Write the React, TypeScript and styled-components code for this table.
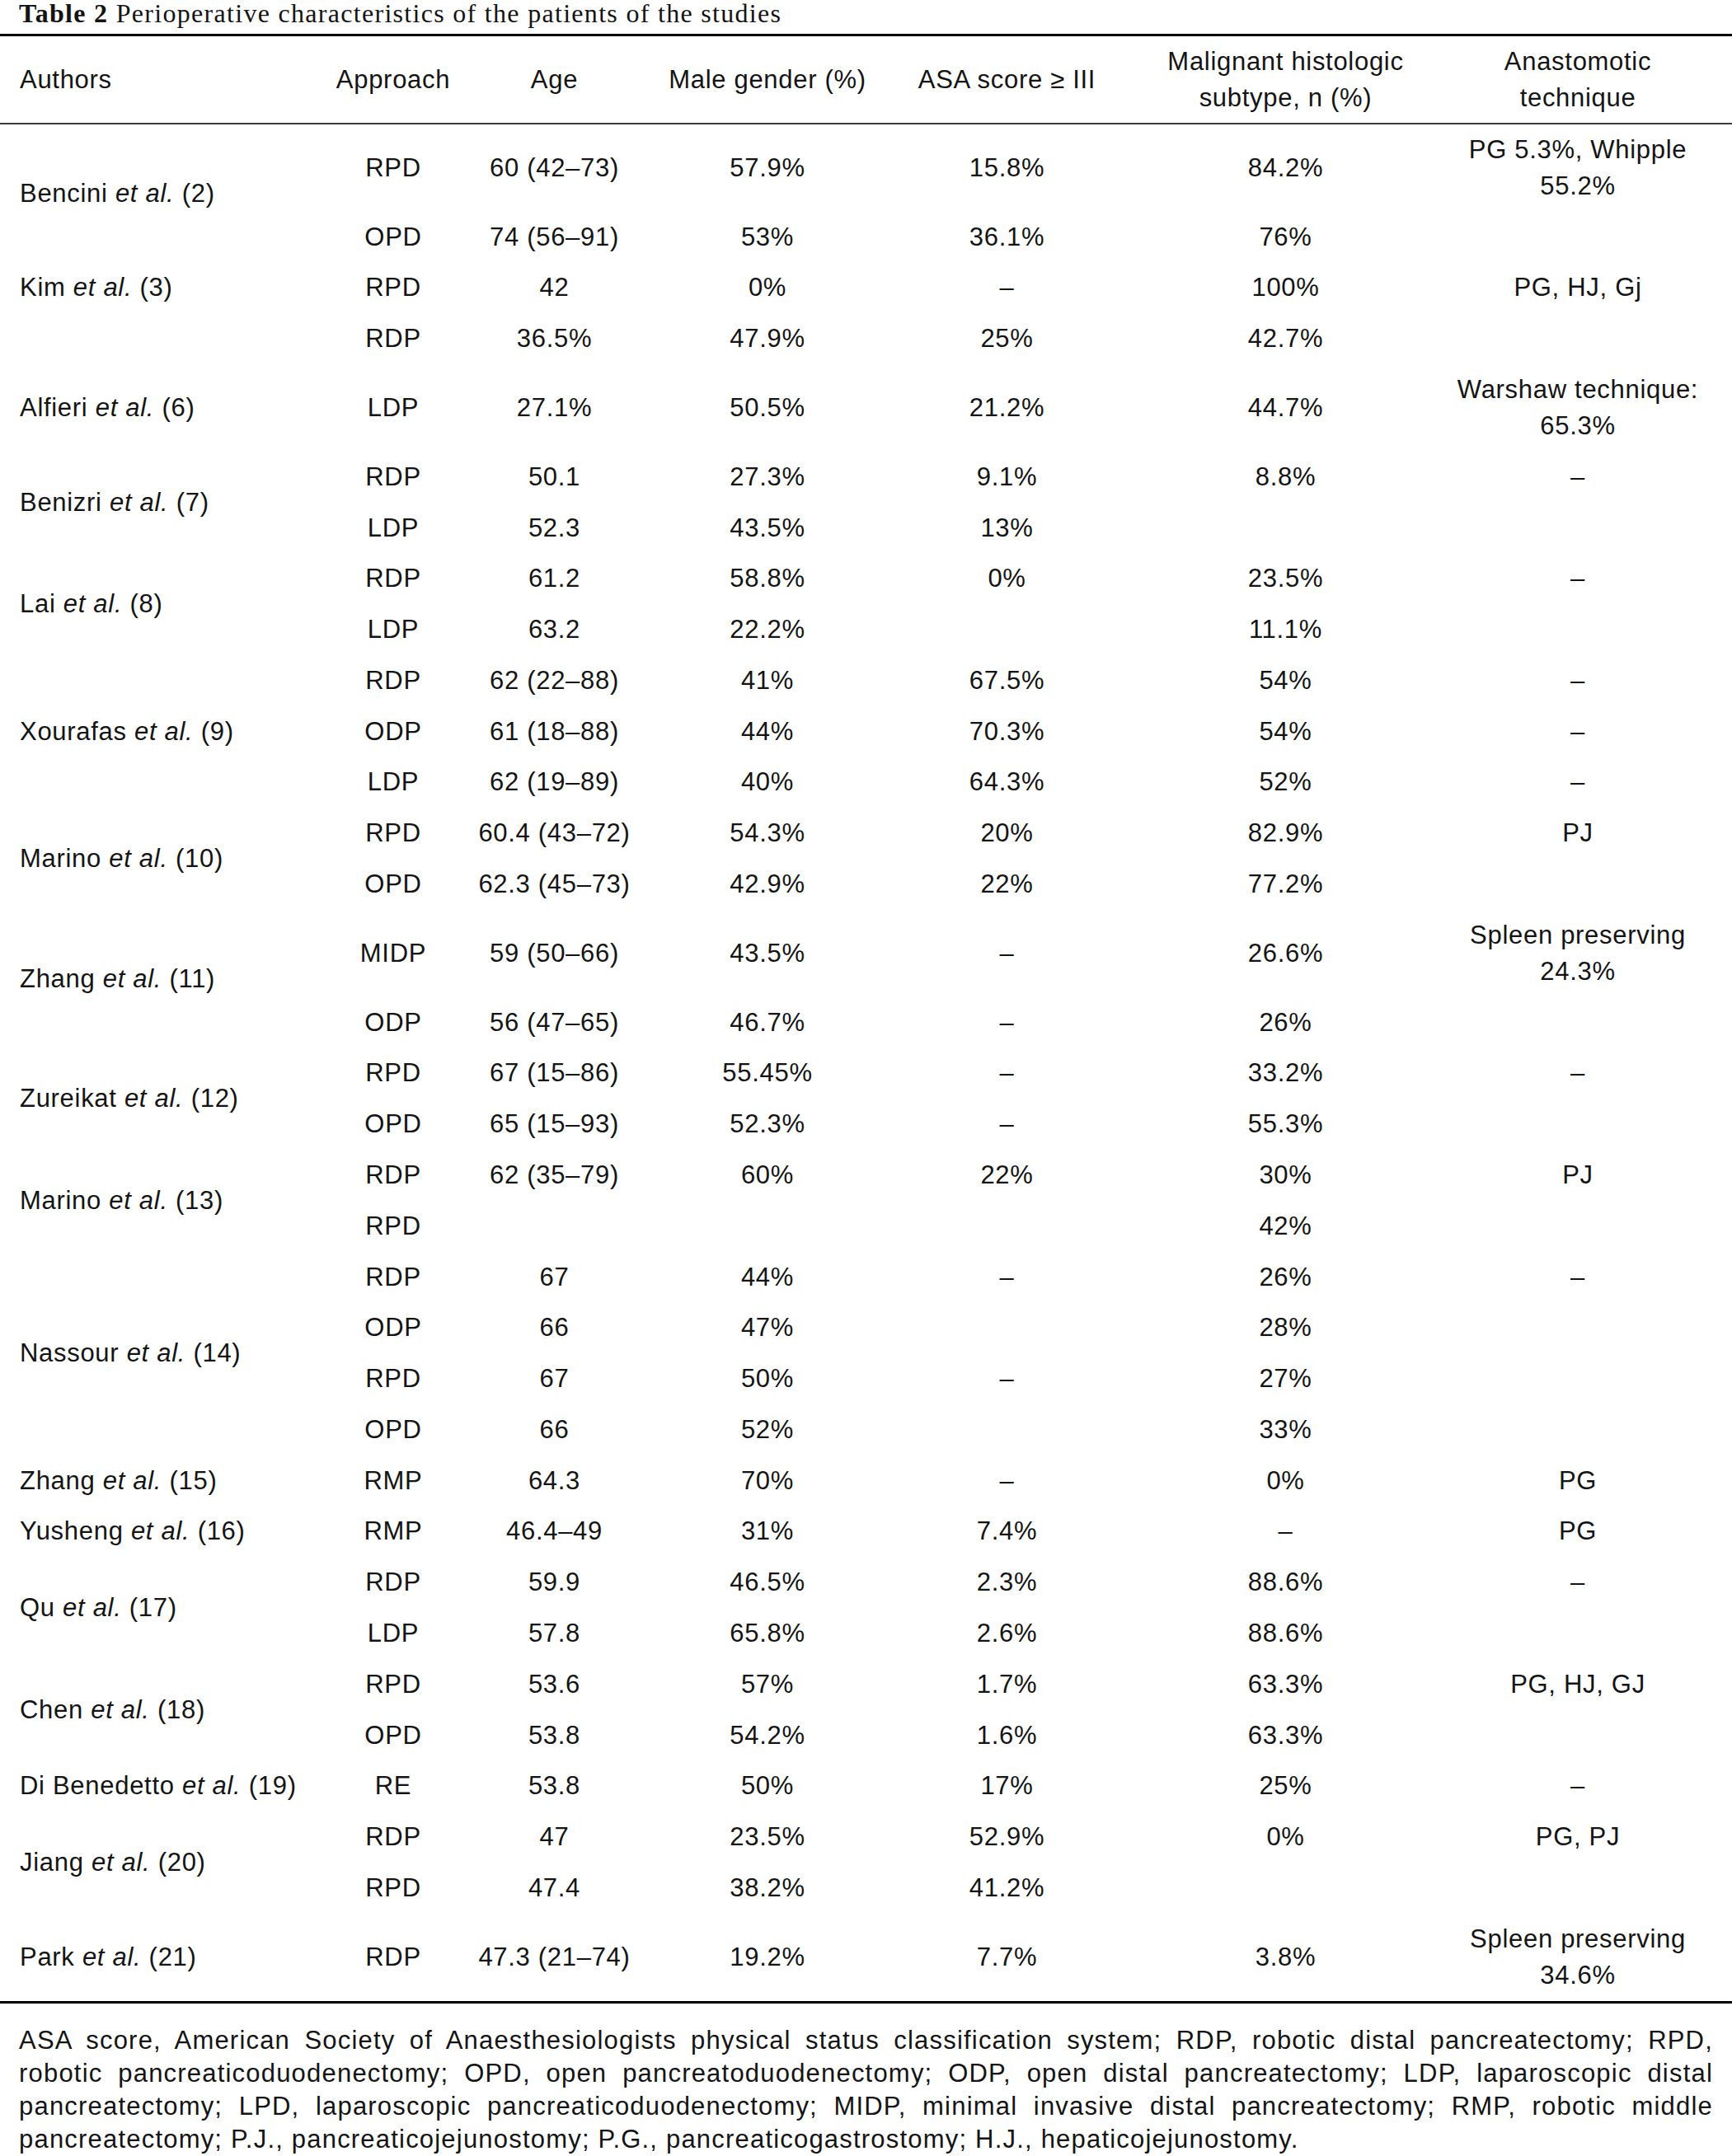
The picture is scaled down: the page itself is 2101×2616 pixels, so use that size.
import React from "react";
import styled, { createGlobalStyle } from "styled-components";

const GlobalStyle = createGlobalStyle`
  html, body { margin: 0; padding: 0; background: #ffffff; }
  body { font-family: "Liberation Sans", Arial, sans-serif; color: #141414; }
`;

const Page = styled.div`
  width: 2101px;
  background: #ffffff;
`;

const Caption = styled.div`
  height: 41px;
  padding-left: 23px;
  box-sizing: border-box;
  font-family: "Liberation Serif", "Times New Roman", serif;
  font-size: 32px;
  letter-spacing: 1.3px;
  line-height: 33px;
  color: #141414;
  white-space: nowrap;
`;

const CaptionLabel = styled.span`
  font-weight: 700;
`;

const Table = styled.table`
  width: 2101px;
  border-collapse: separate;
  border-spacing: 0;
  table-layout: fixed;
  font-family: "Liberation Sans", Arial, sans-serif;
  font-size: 31px;
  letter-spacing: 0.7px;
  color: #141414;
`;

const Col = styled.col<{ $w: number }>`
  width: ${(p) => p.$w}px;
`;

const Th = styled.th<{ $left?: boolean; $last?: boolean }>`
  font-weight: 400;
  line-height: 44px;
  padding: 8.5px 0;
  text-align: ${(p) => (p.$left ? "left" : "center")};
  padding-left: ${(p) => (p.$left ? "24px" : "0")};
  padding-right: ${(p) => (p.$last ? "25px" : "0")};
  vertical-align: middle;
  border-top: 3px solid #000;
  border-bottom: 2px solid #3c3c3c;
`;

const Td = styled.td<{ $left?: boolean; $last?: boolean }>`
  line-height: 44px;
  padding: 8.9px 0;
  text-align: ${(p) => (p.$left ? "left" : "center")};
  padding-left: ${(p) => (p.$left ? "24px" : "0")};
  padding-right: ${(p) => (p.$last ? "25px" : "0")};
  vertical-align: middle;
  white-space: nowrap;
`;

const BodyRow = styled.tr`
  &:last-child > td {
    border-bottom: 3px solid #000;
  }
`;

const Notes = styled.div`
  padding: 25px 23px 0 23px;
  font-size: 31px;
  line-height: 40px;
  letter-spacing: 1.2px;
  color: #141414;
`;

const NoteLine = styled.div<{ $last?: boolean }>`
  text-align: ${(p) => (p.$last ? "left" : "justify")};
  text-align-last: ${(p) => (p.$last ? "left" : "justify")};
`;

type Author = [string, string, number] | "blank" | undefined;

interface Row {
  a?: Author;
  ap: string;
  age: string;
  male: string;
  asa: string;
  mal: string;
  tech?: string[];
}

const rows: Row[] = [
  { a: ["Bencini", "2", 2], ap: "RPD", age: "60 (42–73)", male: "57.9%", asa: "15.8%", mal: "84.2%", tech: ["PG 5.3%, Whipple", "55.2%"] },
  { ap: "OPD", age: "74 (56–91)", male: "53%", asa: "36.1%", mal: "76%" },
  { a: ["Kim", "3", 1], ap: "RPD", age: "42", male: "0%", asa: "–", mal: "100%", tech: ["PG, HJ, Gj"] },
  { a: "blank", ap: "RDP", age: "36.5%", male: "47.9%", asa: "25%", mal: "42.7%" },
  { a: ["Alfieri", "6", 1], ap: "LDP", age: "27.1%", male: "50.5%", asa: "21.2%", mal: "44.7%", tech: ["Warshaw technique:", "65.3%"] },
  { a: ["Benizri", "7", 2], ap: "RDP", age: "50.1", male: "27.3%", asa: "9.1%", mal: "8.8%", tech: ["–"] },
  { ap: "LDP", age: "52.3", male: "43.5%", asa: "13%", mal: "" },
  { a: ["Lai", "8", 2], ap: "RDP", age: "61.2", male: "58.8%", asa: "0%", mal: "23.5%", tech: ["–"] },
  { ap: "LDP", age: "63.2", male: "22.2%", asa: "", mal: "11.1%" },
  { a: ["Xourafas", "9", 3], ap: "RDP", age: "62 (22–88)", male: "41%", asa: "67.5%", mal: "54%", tech: ["–"] },
  { ap: "ODP", age: "61 (18–88)", male: "44%", asa: "70.3%", mal: "54%", tech: ["–"] },
  { ap: "LDP", age: "62 (19–89)", male: "40%", asa: "64.3%", mal: "52%", tech: ["–"] },
  { a: ["Marino", "10", 2], ap: "RPD", age: "60.4 (43–72)", male: "54.3%", asa: "20%", mal: "82.9%", tech: ["PJ"] },
  { ap: "OPD", age: "62.3 (45–73)", male: "42.9%", asa: "22%", mal: "77.2%" },
  { a: ["Zhang", "11", 2], ap: "MIDP", age: "59 (50–66)", male: "43.5%", asa: "–", mal: "26.6%", tech: ["Spleen preserving", "24.3%"] },
  { ap: "ODP", age: "56 (47–65)", male: "46.7%", asa: "–", mal: "26%" },
  { a: ["Zureikat", "12", 2], ap: "RPD", age: "67 (15–86)", male: "55.45%", asa: "–", mal: "33.2%", tech: ["–"] },
  { ap: "OPD", age: "65 (15–93)", male: "52.3%", asa: "–", mal: "55.3%" },
  { a: ["Marino", "13", 2], ap: "RDP", age: "62 (35–79)", male: "60%", asa: "22%", mal: "30%", tech: ["PJ"] },
  { ap: "RPD", age: "", male: "", asa: "", mal: "42%" },
  { a: ["Nassour", "14", 4], ap: "RDP", age: "67", male: "44%", asa: "–", mal: "26%", tech: ["–"] },
  { ap: "ODP", age: "66", male: "47%", asa: "", mal: "28%" },
  { ap: "RPD", age: "67", male: "50%", asa: "–", mal: "27%" },
  { ap: "OPD", age: "66", male: "52%", asa: "", mal: "33%" },
  { a: ["Zhang", "15", 1], ap: "RMP", age: "64.3", male: "70%", asa: "–", mal: "0%", tech: ["PG"] },
  { a: ["Yusheng", "16", 1], ap: "RMP", age: "46.4–49", male: "31%", asa: "7.4%", mal: "–", tech: ["PG"] },
  { a: ["Qu", "17", 2], ap: "RDP", age: "59.9", male: "46.5%", asa: "2.3%", mal: "88.6%", tech: ["–"] },
  { ap: "LDP", age: "57.8", male: "65.8%", asa: "2.6%", mal: "88.6%" },
  { a: ["Chen", "18", 2], ap: "RPD", age: "53.6", male: "57%", asa: "1.7%", mal: "63.3%", tech: ["PG, HJ, GJ"] },
  { ap: "OPD", age: "53.8", male: "54.2%", asa: "1.6%", mal: "63.3%" },
  { a: ["Di Benedetto", "19", 1], ap: "RE", age: "53.8", male: "50%", asa: "17%", mal: "25%", tech: ["–"] },
  { a: ["Jiang", "20", 2], ap: "RDP", age: "47", male: "23.5%", asa: "52.9%", mal: "0%", tech: ["PG, PJ"] },
  { ap: "RPD", age: "47.4", male: "38.2%", asa: "41.2%", mal: "" },
  { a: ["Park", "21", 1], ap: "RDP", age: "47.3 (21–74)", male: "19.2%", asa: "7.7%", mal: "3.8%", tech: ["Spleen preserving", "34.6%"] },
];

const colWidths = [395, 164, 227, 290, 291, 385, 349];

const Lines: React.FC<{ lines: string[] }> = ({ lines }) => (
  <>
    {lines.map((l, i) => (
      <React.Fragment key={i}>
        {i > 0 && <br />}
        {l}
      </React.Fragment>
    ))}
  </>
);

const AuthorCell: React.FC<{ a: Author }> = ({ a }) => {
  if (!a) return null;
  if (a === "blank") return <Td $left />;
  const [name, ref, span] = a;
  return (
    <Td $left rowSpan={span}>
      {name} <i>et al.</i> ({ref})
    </Td>
  );
};

export default function App() {
  return (
    <Page>
      <GlobalStyle />
      <Caption>
        <CaptionLabel>Table 2</CaptionLabel> Perioperative characteristics of the patients of the studies
      </Caption>
      <Table>
        <colgroup>
          {colWidths.map((w, i) => (
            <Col key={i} $w={w} />
          ))}
        </colgroup>
        <thead>
          <tr>
            <Th $left>Authors</Th>
            <Th>Approach</Th>
            <Th>Age</Th>
            <Th>Male gender (%)</Th>
            <Th>ASA score ≥ III</Th>
            <Th>
              <Lines lines={["Malignant histologic", "subtype, n (%)"]} />
            </Th>
            <Th $last>
              <Lines lines={["Anastomotic", "technique"]} />
            </Th>
          </tr>
        </thead>
        <tbody>
          {rows.map((r, i) => (
            <BodyRow key={i}>
              <AuthorCell a={r.a} />
              <Td>{r.ap}</Td>
              <Td>{r.age}</Td>
              <Td>{r.male}</Td>
              <Td>{r.asa}</Td>
              <Td>{r.mal}</Td>
              <Td $last>{r.tech ? <Lines lines={r.tech} /> : null}</Td>
            </BodyRow>
          ))}
        </tbody>
      </Table>
      <Notes>
        <NoteLine>
          ASA score, American Society of Anaesthesiologists physical status classification system; RDP, robotic distal pancreatectomy; RPD,
        </NoteLine>
        <NoteLine>
          robotic pancreaticoduodenectomy; OPD, open pancreatoduodenectomy; ODP, open distal pancreatectomy; LDP, laparoscopic distal
        </NoteLine>
        <NoteLine>
          pancreatectomy; LPD, laparoscopic pancreaticoduodenectomy; MIDP, minimal invasive distal pancreatectomy; RMP, robotic middle
        </NoteLine>
        <NoteLine $last>
          pancreatectomy; P.J., pancreaticojejunostomy; P.G., pancreaticogastrostomy; H.J., hepaticojejunostomy.
        </NoteLine>
      </Notes>
    </Page>
  );
}
